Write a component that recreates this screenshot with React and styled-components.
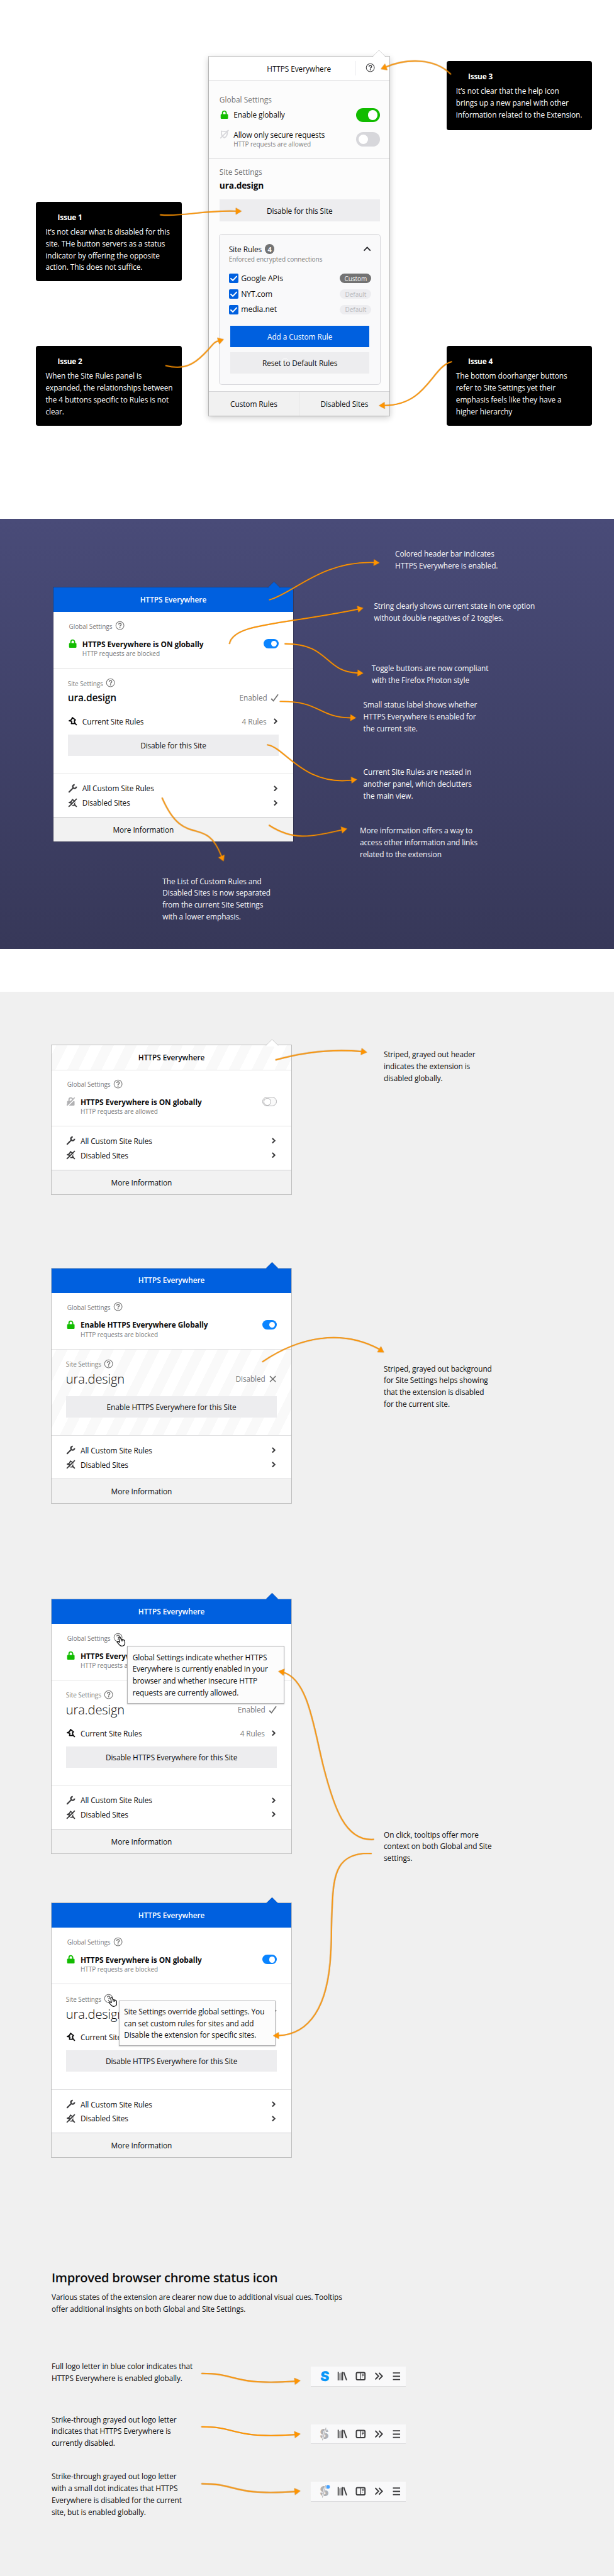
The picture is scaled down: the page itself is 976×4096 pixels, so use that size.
import React from "react";
import styled, { createGlobalStyle, css } from "styled-components";

const Global = createGlobalStyle`
  * { box-sizing: border-box; }
  html, body { margin: 0; padding: 0; background: #fff; }
  body { overflow-x: hidden; }
  button { border: 0; padding: 0; margin: 0; }
`;

const type = (size, weight = 400, track = -0.008) => css`
  font-family: "Open Sans", "Noto Sans", sans-serif;
  font-size: ${size * 0.96}px;
  font-weight: ${weight};
  letter-spacing: ${track}em;
  white-space: nowrap;
`;

const Page = styled.main`
  zoom: 0.953125;
  width: 1024px;
  height: 4297.5px;
  overflow: hidden;
  color: #0c0c0d;
  ${type(13)}
`;

const Section = styled.section`
  position: relative;
  display: flex;
  align-items: flex-start;
`;
const IssuesSection = styled(Section)`
  height: 866px;
  padding-left: 60px;
`;
const OverviewSection = styled(Section)`
  height: 717px;
  padding-left: 89px;
  background: linear-gradient(#494b78, #373859);
`;
const StatesSection = styled(Section)`
  height: 2643px;
  margin-top: 72px;
  padding: 89px 0 0 86px;
  flex-direction: column;
  background: #f0f0f0;
`;

/* Arrows */
const ArrowLayer = styled.svg`
  position: absolute;
  inset: 0;
  width: 1024px;
  height: 100%;
  pointer-events: none;
  path.line { fill: none; stroke: #ff9400; stroke-width: 2; stroke-linecap: round; }
  polygon { fill: #ff9400; }
  g { filter: drop-shadow(0.6px 1px 0.5px rgba(0, 0, 0, 0.3)); }
`;
const Arrows = ({ top, items }) => (
  <ArrowLayer>
    <g transform={`translate(0 ${-top})`}>
      {items.map(([d, x, y, angle]) => (
        <React.Fragment key={d}>
          <path className="line" d={d} />
          <polygon points="0,0 -9.8,-5.8 -9.8,5.8" transform={`translate(${x} ${y}) rotate(${angle})`} />
        </React.Fragment>
      ))}
    </g>
  </ArrowLayer>
);

const issueArrows = [
  ["M267.5 358.3 C305 362 340 350 394 352.2", 403, 352.2, 0],
  ["M276.5 610 C308 618 324 607 340 591 S355 571 365 568.5", 373.3, 566, -18],
  ["M751.5 123.5 C725 97 680 97 644 111.5", 635, 115, 159],
  ["M753 603.5 C720 612 712 676 641 676.4", 631.8, 676.7, 178],
];
const overviewArrows = [
  ["M449.5 1001 C490 990 535 936 624 938.8", 633, 939.4, 3],
  ["M382.7 1074 C390 1040 470 1043 598 1016.5", 606, 1014.5, -13],
  ["M475.5 1074.4 C550 1074 540 1121 597 1123.2", 606, 1123.6, 3],
  ["M467.5 1170.6 C535 1170 530 1197 585 1198", 594, 1198, 2],
  ["M446 1243 C475 1247 505 1311 586 1302", 595.5, 1300.7, -7],
  ["M449 1377.3 C490 1404 520 1396 570 1385", 579, 1383, -12],
  ["M270.5 1331.8 C308 1418 342 1358 369 1428", 373, 1437.5, 67],
];
const stateArrows = [
  ["M460 1768.5 C505 1756 555 1750 603 1754.5", 612, 1756, 8],
  ["M438 2272 C500 2230 570 2218 632 2251", 640.5, 2256.5, 32],
  ["M623 3069 C575 3073 556 3012 540 2950 S515 2803 473 2790.5", 464, 2788.6, 189],
  ["M619 3092.6 C563 3090 556 3125 554 3180 C552 3215 553 3240 551.7 3255 C548 3350 515 3394 465 3396.3", 455.3, 3396.6, 178],
  ["M336.5 3960 C399 3960 384 3980 492 3973", 501, 3971.8, -7],
  ["M336.5 4049 C399 4049 384 4069 492 4062", 501, 4060.8, -7],
  ["M336.5 4144 C399 4144 384 4164 492 4157", 501, 4155.8, -7],
];

/* Icons */
const Help = ({ color = "#737373" }) => (
  <svg width="16" height="16" viewBox="0 0 16 16" fill="none" stroke={color}>
    <circle cx="8" cy="8" r="6.7" strokeWidth="1.1" />
    <path d="M5.9 6.3 A2.1 2.1 0 1 1 8.9 8.1 C8.2 8.5 8 8.8 8 9.5" strokeWidth="1.6" />
    <circle cx="8" cy="11.5" r="1" fill={color} stroke="none" />
  </svg>
);
const Lock = () => (
  <svg width="16" height="16" viewBox="0 0 16 16" fill="none">
    <path d="M4.9 8 V5 A3.1 3.3 0 0 1 11.1 5 V8" stroke="#12bc00" strokeWidth="2" />
    <rect x="1.8" y="6.8" width="12.4" height="8" rx="1.4" fill="#12bc00" />
  </svg>
);
const LockOff = () => (
  <svg width="16" height="16" viewBox="0 0 16 16" fill="none">
    <path d="M4.9 8 V5 A3.1 3.3 0 0 1 11.1 5 V8" stroke="#b1b1b3" strokeWidth="2" />
    <rect x="1.8" y="6.8" width="12.4" height="8" rx="1.4" fill="#b1b1b3" />
    <path d="M2.5 15.8 L15.8 2.5" stroke="#fff" strokeWidth="1.6" />
    <path d="M1.3 14.4 L14.4 1.3" stroke="#b1b1b3" strokeWidth="1.8" />
  </svg>
);
const ShieldOff = () => (
  <svg width="16" height="16" viewBox="0 0 16 16" fill="none" stroke="#d7d7db" strokeWidth="1.8">
    <path d="M3 2.6 C6 3 10 3 13 2.6 C13.4 8 12 12 8 13.8 C4 12 2.6 8 3 2.6 Z" />
    <path d="M1.3 14.6 L15 1" />
  </svg>
);
const pinPath = "M7.4 2.2 L12.4 6 L10.6 7.6 L11.4 11 L10.4 12.2 L5.8 12 L6.4 8.6 L2 7.4 L5.6 6 Z";
const Pin = () => (
  <svg width="16" height="16" viewBox="0 0 16 16" fill="none" stroke="#0c0c0d" strokeWidth="2" strokeLinejoin="round">
    <path d={pinPath} />
    <path d="M10.5 10.5 L14.6 14.6" />
  </svg>
);
const PinOff = () => (
  <svg width="16" height="16" viewBox="0 0 16 16" fill="none" stroke="#3b3b3d" strokeWidth="1.9" strokeLinejoin="round">
    <path d={pinPath} />
    <path d="M10.5 10.5 L14.6 14.6" />
    <path d="M2.6 15.6 L15.6 2.6" stroke="#fff" strokeWidth="1.4" />
    <path d="M1.2 14.6 L14.6 1.2" />
  </svg>
);
const Wrench = () => (
  <svg width="16" height="16" viewBox="0 0 16 16" fill="none" stroke="#3b3b3d" strokeLinecap="round">
    <path d="M2 14 L8.6 7.4" strokeWidth="2.3" />
    <path d="M11.2 2 A3 3 0 1 0 14 4.9" strokeWidth="2.5" strokeLinecap="butt" />
  </svg>
);
const Chevron = () => (
  <svg width="8" height="10" viewBox="0 0 8 10" fill="none" stroke="#3b3b3d" strokeWidth="2.2">
    <path d="M2 1 L6 5 L2 9" />
  </svg>
);
const ChevronUp = () => (
  <svg width="14" height="10" viewBox="0 0 14 10" fill="none" stroke="#2a2a2e" strokeWidth="1.9">
    <path d="M1.6 8 L7 2.4 L12.4 8" />
  </svg>
);
const CheckMark = () => (
  <svg width="14" height="14" viewBox="0 0 14 14" fill="none" stroke="#737373" strokeWidth="1.9">
    <path d="M1.2 8.4 L4.8 12 L12.6 1.4" />
  </svg>
);
const Cross = () => (
  <svg width="14" height="14" viewBox="0 0 14 14" fill="none" stroke="#737373" strokeWidth="1.7">
    <path d="M2.2 2.2 L11.8 11.8 M11.8 2.2 L2.2 11.8" />
  </svg>
);
const Tick = () => (
  <svg width="16" height="16" viewBox="0 0 16 16" fill="none" stroke="#fff" strokeWidth="2.1" strokeLinecap="round">
    <path d="M3.2 8.4 L6.4 11.4 L12.6 4.8" />
  </svg>
);

/* Section 1: annotated current panel */
const IssueColumn = styled.div`
  display: flex;
  flex-direction: column;
  width: 243px;
  gap: ${(p) => p.$gap}px;
  padding-top: ${(p) => p.$top}px;
`;
const IssueCard = styled.article`
  height: ${(p) => p.$height}px;
  padding: 15px 16px;
  border-radius: 4px;
  background: #000;
  color: #fff;
`;
const IssueTitle = styled.h3`
  margin: 0 0 4.7px;
  padding-left: 20px;
  line-height: 20px;
  ${type(13, 700, -0.015)}
`;
const Copy = styled.p`
  margin: 0;
  line-height: 19.7px;
  ${type(13)}
`;
const Lines = ({ text }) =>
  text.split("\n").map((line, i) => (
    <React.Fragment key={line}>
      {i > 0 && <br />}
      {line}
    </React.Fragment>
  ));
const Issue = ({ n, height, text }) => (
  <IssueCard $height={height}>
    <IssueTitle>Issue {n}</IssueTitle>
    <Copy><Lines text={text} /></Copy>
  </IssueCard>
);

const LegacyPanel = styled.div`
  position: relative;
  display: flex;
  flex-direction: column;
  width: 301px;
  height: 600px;
  margin: 94px 95.5px 0 45px;
  background: #fcfcfc;
  box-shadow: 0 0 0 1px rgba(0, 0, 0, 0.22), 0 3px 10px 1px rgba(0, 0, 0, 0.2);
`;
const LegacyHeader = styled.header`
  display: flex;
  align-items: center;
  height: 41px;
  background: #fff;
  border-bottom: 1px solid #d7d7d9;
`;
const LegacyTitle = styled.div`
  width: 245px;
  padding-left: 56px;
  text-align: center;
  ${type(13)}
`;
const HeaderHelp = styled.div`
  display: flex;
  justify-content: center;
  align-items: center;
  width: 49px;
  height: 24px;
  padding-bottom: 2px;
  border-left: 2px solid #ededf0;
`;
const LegacyBlock = styled.div`
  display: flex;
  flex-direction: column;
  height: ${(p) => p.$height}px;
  padding: ${(p) => p.$top}px 15.5px 0 18px;
  border-bottom: 1px solid #d7d7d9;
`;
const LegacyLabel = styled.div`
  color: #737373;
  line-height: 20px;
  ${type(13, 500, 0.002)}
`;
const LegacyRow = styled.div`
  display: flex;
  align-items: center;
  height: ${(p) => p.$height}px;
  margin-top: ${(p) => p.$gap}px;
`;
const RowIcon = styled.span`
  display: flex;
  width: 16px;
  margin-right: ${(p) => p.$gap || 8.3}px;
  padding-bottom: ${(p) => p.$lift || 0}px;
`;
const RowText = styled.div`
  flex: 1;
  line-height: 18px;
`;
const Hint = styled.div`
  color: #7d7d7d;
  line-height: 14px;
  ${type(11)}
`;
const BigSwitch = styled.span`
  display: flex;
  align-items: center;
  justify-content: ${(p) => (p.$on ? "flex-end" : "flex-start")};
  width: 40px;
  height: 24px;
  padding: 0 4px;
  border-radius: 12px;
  background: ${(p) => (p.$on ? "#12bc00" : "#d7d7db")};
  &::after { content: ""; width: 16px; height: 16px; border-radius: 50%; background: #fff; }
`;
const LegacySite = styled.div`
  margin-top: 1.5px;
  line-height: 22px;
  ${type(15, 700, -0.012)}
`;
const FlatButton = styled.button`
  position: relative;
  display: flex;
  align-items: center;
  justify-content: center;
  width: 100%;
  height: 36px;
  margin-top: ${(p) => p.$gap || 0}px;
  flex: none;
  color: ${(p) => (p.$primary ? "#fff" : "#0c0c0d")};
  background: ${(p) => (p.$primary ? "#0060df" : "#ededef")};
  ${type(13)}
`;
const RulesBox = styled.div`
  display: flex;
  flex-direction: column;
  width: 269.5px;
  height: 252px;
  margin: 21px 0 0 -1px;
  padding: 14.5px 14px 0 15.5px;
  border: 1px solid #d7d7db;
  border-radius: 5px;
  background: #f9f9fa;
`;
const RulesHead = styled.div`
  display: flex;
  align-items: center;
  height: 20px;
  svg { margin-left: auto; }
`;
const Count = styled.span`
  display: flex;
  align-items: center;
  justify-content: center;
  width: 16px;
  height: 16px;
  margin-left: 5px;
  border-radius: 50%;
  background: #737373;
  color: #fff;
  ${type(12, 700, 0)}
`;
const Rule = styled.div`
  display: flex;
  align-items: center;
  height: 16px;
  margin-top: ${(p) => (p.$first ? 17 : 10)}px;
`;
const Box = styled.span`
  display: flex;
  width: 16px;
  height: 16px;
  margin-right: 4.5px;
  border-radius: 2px;
  background: #0060df;
`;
const RuleName = styled.span`
  flex: 1;
  padding-bottom: 1px;
  ${type(13.4)}
`;
const Pill = styled.span`
  display: flex;
  align-items: center;
  justify-content: center;
  width: 52.5px;
  height: 16px;
  border-radius: 8px;
  color: ${(p) => (p.$dark ? "#f9f9fa" : "#b9b9bc")};
  background: ${(p) => (p.$dark ? "#737373" : "#ededf0")};
  ${type(11)}
`;
const RuleActions = styled.div`
  display: flex;
  flex-direction: column;
  gap: 8px;
  margin: 19px 3.5px 0 2.7px;
`;
const Ghost = styled.svg`
  position: absolute;
  left: 86px;
  top: 8px;
`;
const LegacyFooter = styled.footer`
  display: flex;
  height: 40px;
  background: #f1f1f1;
`;
const FooterTab = styled.div`
  display: flex;
  align-items: center;
  justify-content: center;
  width: 151px;
  & + & { border-left: 2px solid #e4e4e6; }
`;

const PointerSvg = styled.svg`
  position: absolute;
  top: -11px;
  left: ${(p) => p.$left}px;
`;
const Pointer = ({ left, fill }) => (
  <PointerSvg $left={left} width="22" height="13" viewBox="0 0 22 13">
    <path d="M1 11 L11 1 L21 11" fill={fill} stroke="rgba(0,0,0,0.22)" />
    <path d="M1.4 11 L11 1.5 L20.6 11 V13 H1.4 Z" fill={fill} />
  </PointerSvg>
);

const rules = [["Google APIs", "Custom"], ["NYT.com", "Default"], ["media.net", "Default"]];

const Legacy = () => (
  <LegacyPanel>
    <Pointer left={273.3} fill="#fff" />
    <LegacyHeader>
      <LegacyTitle>HTTPS Everywhere</LegacyTitle>
      <HeaderHelp><Help color="#3b3b3d" /></HeaderHelp>
    </LegacyHeader>
    <LegacyBlock $height={130} $top={21}>
      <LegacyLabel>Global Settings</LegacyLabel>
      <LegacyRow $height={24} $gap={4}>
        <RowIcon $gap={7.5}><Lock /></RowIcon>
        <RowText>Enable globally</RowText>
        <BigSwitch $on />
      </LegacyRow>
      <LegacyRow $height={34} $gap={11}>
        <RowIcon $gap={7.5} $lift={16}><ShieldOff /></RowIcon>
        <RowText>Allow only secure requests<Hint>HTTP requests are allowed</Hint></RowText>
        <BigSwitch />
      </LegacyRow>
    </LegacyBlock>
    <LegacyBlock $height={389} $top={12}>
      <LegacyLabel>Site Settings</LegacyLabel>
      <LegacySite>ura.design</LegacySite>
      <FlatButton $gap={12.5}>Disable for this Site</FlatButton>
      <RulesBox>
        <RulesHead>Site Rules <Count>4</Count><ChevronUp /></RulesHead>
        <Hint>Enforced encrypted connections</Hint>
        {rules.map(([name, kind], i) => (
          <Rule key={name} $first={i === 0}>
            <Box><Tick /></Box>
            <RuleName>{name}</RuleName>
            <Pill $dark={kind === "Custom"}>{kind}</Pill>
          </Rule>
        ))}
        <RuleActions>
          <FlatButton $primary>Add a Custom Rule</FlatButton>
          <FlatButton>
            Reset to Default Rules
            <Ghost width="11" height="15" viewBox="0 0 11 15" fill="none" stroke="#fff">
              <path d="M3 12 A5 5.4 0 1 1 8 12" />
              <path d="M5.5 4 V5.2 M5.5 6.6 V10" />
            </Ghost>
          </FlatButton>
        </RuleActions>
      </RulesBox>
    </LegacyBlock>
    <LegacyFooter>
      <FooterTab>Custom Rules</FooterTab>
      <FooterTab>Disabled Sites</FooterTab>
    </LegacyFooter>
  </LegacyPanel>
);

/* Redesigned card */
const stripes = css`
  background: repeating-linear-gradient(116.5deg, #fff 0 7.2px, #f9f9f9 7.2px 24px, #fff 24px 34.4px);
`;
const CardBox = styled.div`
  position: relative;
  display: flex;
  flex-direction: column;
  width: 400px;
  flex: none;
  background: #fff;
  box-shadow: 0 0 0 1px rgba(0, 0, 0, 0.22);
`;
const CardHeader = styled.header`
  display: flex;
  align-items: center;
  justify-content: center;
  height: ${(p) => (p.$off ? 42 : 41)}px;
  padding-bottom: 2px;
  color: ${(p) => (p.$off ? "#0c0c0d" : "#fff")};
  background: #0060df;
  ${(p) => p.$off && stripes}
  ${(p) => p.$off && "border-bottom: 1px solid #e4e4e4;"}
  ${type(13, 600, -0.006)}
`;
const CardBlock = styled.div`
  height: ${(p) => p.$height}px;
  padding: ${(p) => p.$top}px 24px 0;
  border-top: ${(p) => (p.$line ? "1px solid #e1e1e2" : "0")};
  ${(p) => p.$striped && stripes}
`;
const Caption = styled.div`
  display: flex;
  align-items: center;
  gap: 4.5px;
  height: 16px;
  padding-left: ${(p) => p.$indent || 0}px;
  color: #7d7d7d;
  ${type(11)}
  svg { margin-bottom: 2px; }
`;
const Row = styled.div`
  display: flex;
  align-items: center;
  height: ${(p) => p.$height || 16}px;
  margin-top: ${(p) => p.$gap || 0}px;
`;
const Strong = styled.div`
  flex: 1;
  ${type(13, 700, -0.004)}
`;
const CardHint = styled(Hint)`
  margin: 2px 0 0 24.3px;
`;
const Switch = styled.span`
  display: flex;
  align-items: center;
  justify-content: ${(p) => (p.$on ? "flex-end" : "flex-start")};
  width: 25px;
  height: 16px;
  padding: 0 3px 0 ${(p) => (p.$on ? 3 : 2)}px;
  border-radius: 8px;
  background: ${(p) => (p.$on ? "#0a84ff" : "#fafafa")};
  border: ${(p) => (p.$on ? "0" : "1px solid #b1b1b3")};
  &::after {
    content: "";
    width: 10px;
    height: 10px;
    border-radius: 50%;
    background: #fff;
    ${(p) => !p.$on && "border: 1px solid #b1b1b3;"}
  }
`;
const SiteName = styled.div`
  flex: 1;
  ${(p) => (p.$light ? type(22, 300, -0.006) : type(17, 600, -0.01))}
`;
const Muted = styled.span`
  margin-right: ${(p) => p.$gap}px;
  color: #7a7a7a;
`;
const Grow = styled.span`flex: 1;`;
const ChevronSlot = styled.span`
  display: flex;
  padding-right: 1.5px;
`;
const CardFooter = styled.footer`
  height: 41px;
  border-top: 1px solid #cfcfd1;
  background: #f2f2f2;
`;
const FooterLabel = styled.div`
  width: 300px;
  line-height: 40px;
  text-align: center;
`;
const Tooltip = styled.div`
  position: absolute;
  left: ${(p) => p.$left}px;
  top: ${(p) => p.$top}px;
  width: ${(p) => p.$width}px;
  height: ${(p) => p.$height}px;
  padding: ${(p) => p.$pad}px 0 0 8px;
  border: 1px solid #b2b2b4;
  background: #fcfcfc;
  box-shadow: 0 1px 2px rgba(0, 0, 0, 0.22);
`;
const Hand = styled.svg`
  position: absolute;
  left: ${(p) => p.$left}px;
  top: ${(p) => p.$top}px;
`;
const Cursor = (p) => (
  <Hand {...p} width="15" height="17" viewBox="0 0 15 17" fill="#fff" stroke="#111" strokeWidth="1.3" strokeLinejoin="round">
    <path d="M4.6 1.4 C5.4 .6 6.4 1 6.7 1.9 L8 5.4 C8.8 4.6 9.8 4.8 10.2 5.6 C11 5 12 5.3 12.3 6.2 C13.3 6 13.8 6.8 13.9 7.6 L14.2 11 C14.3 13.4 12.6 15.6 10 16 C7.6 16.4 5.8 15.4 4.6 13.6 L1.2 9.6 C.8 8.6 2 7.8 3 8.5 L5.4 9.8 L4.2 3 C4 2.3 4.2 1.8 4.6 1.4 Z" />
    <path d="M8 5.4 L8.6 8 M10.2 5.6 L10.8 8.2" fill="none" />
  </Hand>
);

const Card = ({ off, strong = "HTTPS Everywhere is ON globally", site = "on", light, button, children }) => (
  <CardBox>
    <Pointer left={357} fill={off ? "#fff" : "#0060df"} />
    <CardHeader $off={off}>HTTPS Everywhere</CardHeader>
    <CardBlock $height={off ? 92 : 93} $top={off ? 15 : 16}>
      <Caption $indent={2}>Global Settings<Help /></Caption>
      <Row $gap={13}>
        <RowIcon>{off ? <LockOff /> : <Lock />}</RowIcon>
        <Strong>{strong}</Strong>
        <Switch $on={!off} />
      </Row>
      <CardHint>HTTP requests are {off ? "allowed" : "blocked"}</CardHint>
    </CardBlock>
    {!off && (
      <CardBlock $line $striped={site === "off"} $height={site === "off" ? 144 : 176} $top={17}>
        <Caption>Site Settings<Help /></Caption>
        <Row $gap={4} $height={24}>
          <SiteName $light={light}>ura.design</SiteName>
          <Muted $gap={5.5}>{site === "off" ? "Disabled" : "Enabled"}</Muted>
          {site === "off" ? <Cross /> : <CheckMark />}
        </Row>
        {site === "on" && (
          <Row $gap={19}>
            <RowIcon><Pin /></RowIcon>
            <Grow>Current Site Rules</Grow>
            <Muted $gap={11}>4 Rules</Muted>
            <ChevronSlot><Chevron /></ChevronSlot>
          </Row>
        )}
        <FlatButton $gap={site === "on" ? 14 : 17}>{button}</FlatButton>
      </CardBlock>
    )}
    <CardBlock $line $height={73} $top={12}>
      <Row $height={24}>
        <RowIcon><Wrench /></RowIcon><Grow>All Custom Site Rules</Grow><ChevronSlot><Chevron /></ChevronSlot>
      </Row>
      <Row $height={24}>
        <RowIcon><PinOff /></RowIcon><Grow>Disabled Sites</Grow><ChevronSlot><Chevron /></ChevronSlot>
      </Row>
    </CardBlock>
    <CardFooter><FooterLabel>More Information</FooterLabel></CardFooter>
    {children}
  </CardBox>
);

/* Notes */
const NoteText = styled(Copy)`
  margin: ${(p) => p.$top || 0}px 0 0 ${(p) => p.$left || 0}px;
`;
const Note = ({ top, left, text }) => (
  <NoteText $top={top} $left={left}><Lines text={text} /></NoteText>
);
const CardColumn = styled.div`
  display: flex;
  flex-direction: column;
  gap: ${(p) => p.$gap || 0}px;
  padding-top: ${(p) => p.$top || 0}px;
`;
const NoteColumn = styled.div`
  margin-left: 111px;
  padding-top: 47.6px;
`;
const LightNotes = styled.div`
  display: contents;
  & ${NoteText} { color: #fafafc; }
`;
const StateRow = styled.div`
  display: flex;
  align-items: flex-start;
  margin-top: ${(p) => p.$top || 0}px;
`;

const Heading = styled.h2`
  margin: 185px 0 8px;
  line-height: 30px;
  ${type(22, 600, -0.015)}
`;
const StatusList = styled.div`
  display: flex;
  flex-direction: column;
  margin-top: 76px;
`;
const StatusRow = styled.div`
  display: flex;
  align-items: flex-start;
  height: ${(p) => p.$height}px;
`;
const StatusText = styled.div`width: 432px;`;
const Toolbar = styled.div`
  display: flex;
  align-items: center;
  width: 159px;
  height: 33px;
  margin-top: ${(p) => p.$top}px;
  padding-left: 8.5px;
  background: #f9f9fa;
  border-bottom: 1px solid #dcdcde;
`;
const Tool = styled.svg`
  width: 30px;
  height: 32px;
  flex: none;
`;
const LogoLetter = styled.text`
  font-family: Inter, sans-serif;
  font-size: ${(p) => p.$size}px;
  font-weight: 900;
  text-anchor: middle;
`;
const dark = "#3b3b3d";
const StatusBar = ({ top, state }) => (
  <Toolbar $top={top}>
    <Tool viewBox="0 0 30 32">
      {state === "on" ? (
        <LogoLetter $size={22.5} x="15" y="24.3" fill="#0996f8" transform="skewX(-4) translate(1.2 0)">S</LogoLetter>
      ) : (
        <>
          <LogoLetter $size={22} x="14" y="24" fill="#b1b1b3">S</LogoLetter>
          <path d="M10.9 26.5 L17 5.5" stroke="#f9f9fa" strokeWidth="3" />
          <path d="M10.9 26.5 L17 5.5" stroke="#b1b1b3" strokeWidth="1.2" />
          {state === "site" && <circle cx="20.4" cy="8.6" r="4" fill="#f9f9fa" />}
          {state === "site" && <circle cx="20.4" cy="8.6" r="3" fill="#45a1ff" />}
        </>
      )}
    </Tool>
    <Tool viewBox="0 0 30 32" stroke={dark} strokeWidth="2">
      <path d="M8 9 V23 M15.2 9 V23" strokeWidth="1.8" />
      <path d="M10.6 11 V23" stroke="#8a8a8c" strokeWidth="1.6" />
      <path d="M12.9 10 V23" stroke="#77777a" strokeWidth="1.6" />
      <path d="M17.3 9.4 L22 22.8" />
    </Tool>
    <Tool viewBox="0 0 30 32" fill="none" stroke={dark}>
      <rect x="7.8" y="10" width="14.4" height="12" rx="2" strokeWidth="2" />
      <path d="M15 10 V22" strokeWidth="1.2" />
      <path d="M16.8 12.8 H20.4 M16.8 15.1 H20.4 M16.8 17.4 H19" strokeWidth="1" />
    </Tool>
    <Tool viewBox="0 0 30 32" fill="none" stroke={dark} strokeWidth="2">
      <path d="M9 10.5 L14.4 16 L9 21.5 M15.2 10.5 L20.6 16 L15.2 21.5" />
    </Tool>
    <Tool viewBox="0 0 30 32" stroke={dark} strokeWidth="2">
      <path d="M9 10.6 H21 M9 16.2 H21 M9 21.6 H21" />
    </Tool>
  </Toolbar>
);

export default function App() {
  return (
    <Page>
      <Global />
      <IssuesSection>
        <IssueColumn $top={337} $gap={109}>
          <Issue n={1} height={131.5} text={"It’s not clear what is disabled for this\nsite. THe button servers as a status\nindicator by offering the opposite\naction. This does not suffice."} />
          <Issue n={2} height={133} text={"When the Site Rules panel is\nexpanded, the relationships between\nthe 4 buttons specific to Rules is not\nclear."} />
        </IssueColumn>
        <Legacy />
        <IssueColumn $top={102} $gap={360}>
          <Issue n={3} height={115.5} text={"It’s not clear that the help icon\nbrings up a new panel with other\ninformation related to the Extension."} />
          <Issue n={4} height={133} text={"The bottom doorhanger buttons\nrefer to Site Settings yet their\nemphasis feels like they have a\nhigher hierarchy"} />
        </IssueColumn>
        <Arrows top={0} items={issueArrows} />
      </IssuesSection>

      <OverviewSection>
        <LightNotes>
          <CardColumn $top={114}>
            <Card button="Disable for this Site" />
            <Note top={56} left={182} text={"The List of Custom Rules and\nDisabled Sites is now separated\nfrom the current Site Settings\nwith a lower emphasis."} />
          </CardColumn>
          <NoteColumn>
            <Note left={59} text={"Colored header bar indicates\nHTTPS Everywhere is enabled."} />
            <Note top={48} left={23.7} text={"String clearly shows current state in one option\nwithout double negatives of 2 toggles."} />
            <Note top={64.7} left={19.8} text={"Toggle buttons are now compliant\nwith the Firefox Photon style"} />
            <Note top={21.3} left={6} text={"Small status label shows whether\nHTTPS Everywhere is enabled for\nthe current site."} />
            <Note top={53.4} left={6} text={"Current Site Rules are nested in\nanother panel, which declutters\nthe main view."} />
            <Note top={38} text={"More information offers a way to\naccess other information and links\nrelated to the extension"} />
          </NoteColumn>
        </LightNotes>
        <Arrows top={866} items={overviewArrows} />
      </OverviewSection>

      <StatesSection>
        <StateRow>
          <Card off />
          <Note top={5} left={154} text={"Striped, grayed out header\nindicates the extension is\ndisabled globally."} />
        </StateRow>
        <StateRow $top={124}>
          <Card light site="off" strong="Enable HTTPS Everywhere Globally" button="Enable HTTPS Everywhere for this Site" />
          <Note top={157.2} left={154} text={"Striped, grayed out background\nfor Site Settings helps showing\nthat the extension is disabled\nfor the current site."} />
        </StateRow>
        <StateRow $top={160}>
          <CardColumn $gap={83}>
            <Card light button="Disable HTTPS Everywhere for this Site">
              <Tooltip $left={126} $top={78} $width={262} $height={96} $pad={7.7}>
                <Copy><Lines text={"Global Settings indicate whether HTTPS\nEverywhere is currently enabled in your\nbrowser and whether insecure HTTP\nrequests are currently allowed."} /></Copy>
              </Tooltip>
              <Cursor $left={108.5} $top={62} />
            </Card>
            <Card light button="Disable HTTPS Everywhere for this Site">
              <Tooltip $left={112} $top={162} $width={262} $height={76} $pad={7.7}>
                <Copy><Lines text={"Site Settings override global settings. You\ncan set custom rules for sites and add\nDisable the extension for specific sites."} /></Copy>
              </Tooltip>
              <Cursor $left={94.5} $top={156} />
            </Card>
          </CardColumn>
          <Note top={382.7} left={154} text={"On click, tooltips offer more\ncontext on both Global and Site\nsettings."} />
        </StateRow>

        <Heading>Improved browser chrome status icon</Heading>
        <Copy><Lines text={"Various states of the extension are clearer now due to additional visual cues. Tooltips\noffer additional insights on both Global and Site Settings."} /></Copy>
        <StatusList>
          <StatusRow $height={89}>
            <StatusText><Note text={"Full logo letter in blue color indicates that\nHTTPS Everywhere is enabled globally."} /></StatusText>
            <StatusBar top={11} state="on" />
          </StatusRow>
          <StatusRow $height={95}>
            <StatusText><Note text={"Strike-through grayed out logo letter\nindicates that HTTPS Everywhere is\ncurrently disabled."} /></StatusText>
            <StatusBar top={18} state="off" />
          </StatusRow>
          <StatusRow $height={80}>
            <StatusText><Note text={"Strike-through grayed out logo letter\nwith a small dot indicates that HTTPS\nEverywhere is disabled for the current\nsite, but is enabled globally."} /></StatusText>
            <StatusBar top={19} state="site" />
          </StatusRow>
        </StatusList>
        <Arrows top={1655} items={stateArrows} />
      </StatesSection>
    </Page>
  );
}
